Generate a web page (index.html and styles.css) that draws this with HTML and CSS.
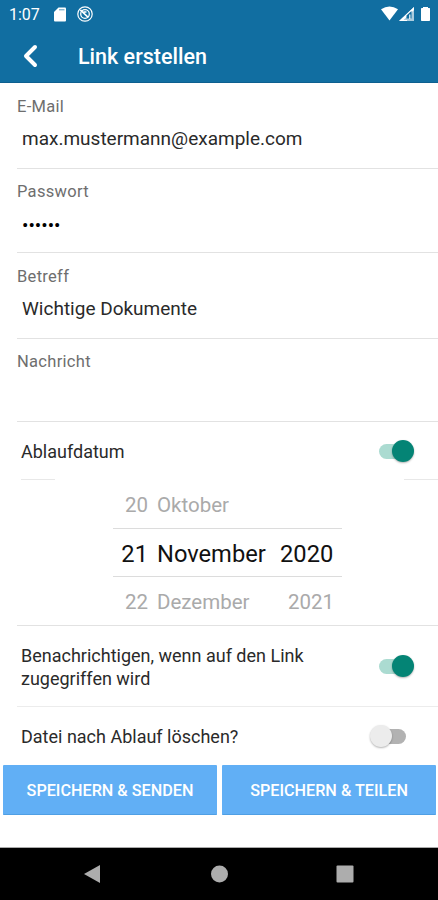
FILE: index.html
```html
<!DOCTYPE html>
<html lang="de">
<head>
    <meta charset="UTF-8">
    <title>Link erstellen</title>
    <link rel="stylesheet" href="styles.css">
</head>
<body>
    <header class="header">
        <div class="status">
            <span class="time">1:07</span>
            <svg class="sd" width="12" height="15" viewBox="0 0 12 15"><path fill="#fff" d="M4.5 0.5H11Q12 0.5 12 1.5V13.5Q12 14.5 11 14.5H1Q0 14.5 0 13.5V5z"/><path stroke="#116ea1" stroke-opacity="0.7" stroke-width="1" d="M5 2.8H10.5"/></svg>
            <svg class="sync" width="16" height="16" viewBox="0 0 16 16" fill="none" stroke="#fff"><circle cx="8" cy="8" r="7.2" stroke-width="1.2"/><circle cx="8" cy="8" r="4.3" stroke-width="1.3"/><path stroke-width="1.6" d="M3.3 3.9L11.2 11.3M6.5 6H9.5"/></svg>
            <svg class="signal" width="50" height="16" viewBox="0 0 50 16">
                <path fill="#fff" d="M0 3.2Q8.5-2.4 17 3.2L8.5 14.5z"/>
                <path fill="#fff" fill-opacity="0.65" d="M18 15L33 1V15z"/>
                <path fill="#fff" d="M18 15L33 1V4L22.5 14H26V15z"/>
                <path fill="#116ea1" d="M25.5 12.5V9.5L30.5 5V12.5z"/>
                <path fill="#fff" fill-opacity="0.8" d="M28 8.5H29.5V13H28z"/>
                <path fill="#fff" d="M42 1H47V2H48.5Q49 2 49 2.8V14.2Q49 15 48.2 15H40.8Q40 15 40 14.2V2.8Q40 2 40.8 2H42z"/>
            </svg>
        </div>
        <div class="bar">
            <svg class="back" width="16" height="24" viewBox="0 0 16 24"><path fill="none" stroke="#fff" stroke-width="4" stroke-linecap="round" stroke-linejoin="round" d="M13 3L4 12L13 21"/></svg>
            <h1>Link erstellen</h1>
        </div>
    </header>

    <main>
        <div class="field">
            <label>E-Mail</label>
            <p class="mail">max.mustermann@example.com</p>
        </div>
        <div class="field password">
            <label>Passwort</label>
            <p class="dots">••••••</p>
        </div>
        <div class="field">
            <label>Betreff</label>
            <p>Wichtige Dokumente</p>
        </div>
        <div class="field message">
            <label>Nachricht</label>
        </div>

        <div class="row expiry">
            <span>Ablaufdatum</span>
            <i class="switch on"></i>
        </div>
        <div class="edges"><i></i><i></i></div>
        <div class="picker">
            <div class="date"><span>20</span><span>Oktober</span><span></span></div>
            <div class="date current"><span>21</span><span>November</span><span>2020</span></div>
            <div class="date"><span>22</span><span>Dezember</span><span>2021</span></div>
        </div>
        <div class="row notify">
            <span>Benachrichtigen, wenn auf den Link<br>zugegriffen wird</span>
            <i class="switch on"></i>
        </div>
        <div class="row delete">
            <span>Datei nach Ablauf löschen?</span>
            <i class="switch"></i>
        </div>
        <div class="buttons">
            <button>SPEICHERN &amp; SENDEN</button>
            <button>SPEICHERN &amp; TEILEN</button>
        </div>
    </main>

    <nav class="nav">
        <svg width="438" height="52" viewBox="0 0 438 52" fill="#adadad">
            <path d="M84 26L100 17V35z"/>
            <circle cx="219.5" cy="26" r="8.5"/>
            <rect x="336.5" y="17.5" width="17" height="17" rx="1"/>
        </svg>
    </nav>
</body>
</html>
```

FILE: styles.css
```css
* {
    margin: 0;
    padding: 0;
    box-sizing: border-box;
}
body {
    width: 438px;
    height: 900px;
    display: flex;
    flex-direction: column;
    background: #fff;
    color: #2a2a2a;
    font-family: Roboto, sans-serif;
    overflow: hidden;
}
svg {
    display: block;
}
.header {
    height: 83px;
    background: #116ea1;
    border-bottom: 1px solid #0d5f8f;
    color: #fff;
}
.status {
    height: 28px;
    display: flex;
    align-items: center;
    padding: 0 7px 0 9px;
}
.time {
    width: 45px;
    font-size: 16px;
}
.sync {
    margin-left: 11px;
}
.signal {
    margin-left: auto;
}
.bar {
    height: 56px;
    display: flex;
    align-items: center;
    padding-left: 22px;
}
.bar h1 {
    margin-left: 40px;
    font-size: 21.5px;
    font-weight: 500;
}
main {
    flex: 1;
}
.field {
    height: 85px;
    margin-left: 17px;
    padding-top: 13px;
    border-bottom: 1px solid #e2e2e2;
}
.field:first-child {
    height: 86px;
    padding-top: 14px;
}
.field.password {
    height: 84px;
}
.field:nth-child(3) {
    height: 86px;
    padding-top: 14px;
}
.field.message {
    height: 83px;
}
.field label {
    display: block;
    color: #6e6e6e;
    font-size: 16.5px;
    line-height: 20px;
    letter-spacing: 0.3px;
}
.field p {
    padding: 10px 0 0 5px;
    font-size: 19px;
    line-height: 24px;
}
.field .dots {
    padding-top: 12px;
    color: #000;
}
.row {
    display: flex;
    align-items: center;
    justify-content: space-between;
    margin-left: 17px;
    padding: 2px 23px 0 4px;
    font-size: 18px;
    line-height: 23px;
}
.expiry {
    height: 57px;
}
.switch {
    position: relative;
    width: 36px;
    height: 24px;
}
.switch::before {
    content: "";
    position: absolute;
    left: 0;
    top: 4px;
    width: 27px;
    height: 15px;
    border-radius: 8px;
    background: #b2b2b2;
}
.switch::after {
    content: "";
    position: absolute;
    left: -9px;
    top: 0;
    width: 22px;
    height: 22px;
    border-radius: 50%;
    background: #ececec;
    box-shadow: 0 1px 2px rgba(0, 0, 0, 0.3);
}
.switch.on::before {
    background: #abdbd1;
}
.switch.on::after {
    left: 13px;
    background: #048475;
}
.edges {
    display: flex;
    justify-content: space-between;
    padding-left: 21px;
}
.edges i {
    width: 34px;
    height: 1px;
    background: #e8e8e8;
}
.picker {
    height: 146px;
    margin-left: 17px;
    padding-left: 96px;
    border-bottom: 1px solid #e2e2e2;
}
.date {
    width: 229px;
    height: 48px;
    display: grid;
    grid-template-columns: 35px 112px 65px;
    column-gap: 9px;
    align-items: center;
    padding-top: 2px;
    color: #aaa;
    font-size: 20.5px;
}
.date span:first-child {
    text-align: right;
}
.date span:last-child {
    padding-left: 10px;
}
.date.current {
    height: 49px;
    border-top: 1px solid #dcdcdc;
    border-bottom: 1px solid #dcdcdc;
    color: #111;
    font-size: 23.7px;
}
.date.current span:last-child {
    padding-left: 2px;
}
.notify {
    height: 81px;
    border-bottom: 1px solid #ececec;
}
.delete {
    height: 57px;
}
.buttons {
    display: flex;
    gap: 5px;
    padding: 1px 2px 0 3px;
}
.buttons button {
    flex: 1;
    height: 50px;
    padding-top: 1px;
    border: none;
    border-bottom: 1px solid #4f9fe4;
    border-radius: 1px;
    background: #61aff5;
    color: #fff;
    font: 500 16.2px Roboto, sans-serif;
    white-space: nowrap;
}
.nav {
    height: 53px;
    border-top: 1px solid #aaa;
    background: #000;
}
```
